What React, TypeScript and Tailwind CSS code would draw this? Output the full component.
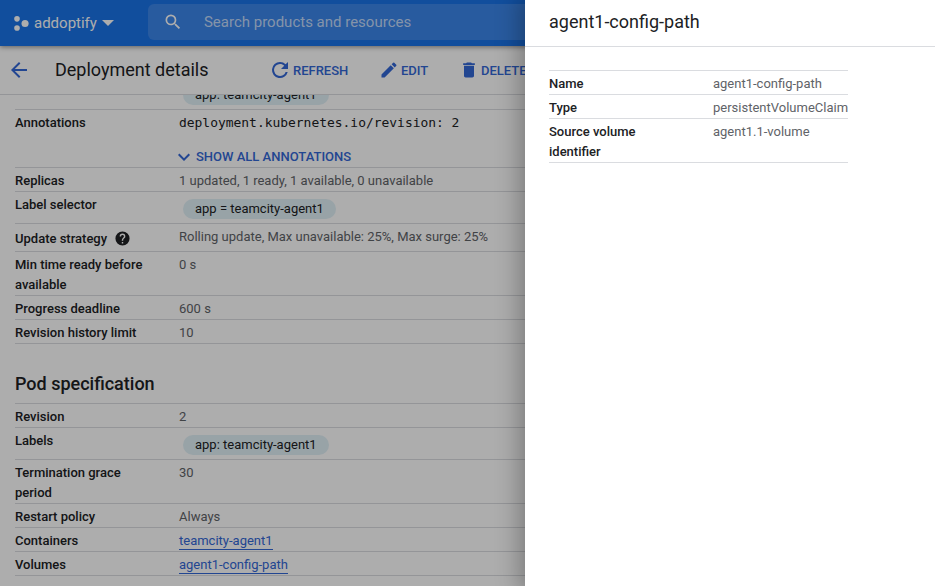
import React from "react";

function Row({ label, children, cls = "" }: { label: React.ReactNode; children?: React.ReactNode; cls?: string }) {
  return (
    <div className={`flex border-b border-[#dadce0] text-[13px] leading-5 ${cls}`}>
      <div className="w-[164px] shrink-0 pr-2 font-medium text-[#202124]">{label}</div>
      <div className="flex-1 text-[#5f6368] whitespace-nowrap">{children}</div>
    </div>
  );
}

function Chip({ children }: { children: React.ReactNode }) {
  return (
    <span className="ml-[4px] mt-[4px] inline-flex h-5 items-center rounded-full bg-[#e1f1f7] px-3 text-[13px] leading-5 text-[#202124]">
      {children}
    </span>
  );
}

function Link({ children }: { children: React.ReactNode }) {
  return <span className="inline-block h-[19px] border-b border-[#3367d6] leading-5 text-[#3367d6]">{children}</span>;
}

function Action({ icon, label, cls, gap }: { icon: React.ReactNode; label: string; cls: string; gap: string }) {
  return (
    <div className={`flex shrink-0 items-center text-[13px] font-medium text-[#3367d6] ${cls} ${gap}`}>
      {icon}
      <span className="mt-[2px]">{label}</span>
    </div>
  );
}

export default function App() {
  return (
    <div className="relative h-[586px] w-[935px] overflow-hidden bg-white font-['Roboto',sans-serif]">
      <div className="flex h-full w-full flex-col">
        <header className="relative z-10 flex h-[46px] shrink-0 items-center bg-[#1a73e8] shadow-[0_1px_5px_rgba(0,0,0,0.45)]">
          <svg viewBox="0 0 16 16" className="ml-[14px] h-[15px] w-[15px] shrink-0 fill-white">
            <circle cx="3.2" cy="3" r="3" />
            <circle cx="3.2" cy="12.8" r="3" />
            <circle cx="11.8" cy="8" r="3.8" />
          </svg>
          <span className="ml-[5px] text-[15px] leading-none text-white">addoptify</span>
          <svg viewBox="0 0 12 6" className="ml-[5px] mt-[-1px] h-[6px] w-[12px] shrink-0 fill-white">
            <path d="M0 0h12L6 6z" />
          </svg>
          <div className="mb-[2px] ml-[34px] flex h-9 w-[500px] shrink-0 items-center rounded-[6px] bg-[#3c86eb]">
            <svg viewBox="0 0 24 24" className="ml-[15px] h-5 w-5 shrink-0 fill-white">
              <path d="M15.5 14h-.79l-.28-.27A6.47 6.47 0 0 0 16 9.5 6.5 6.5 0 1 0 9.5 16c1.61 0 3.09-.59 4.23-1.57l.27.28v.79l5 4.99L20.49 19l-4.99-5zm-6 0C7.01 14 5 11.99 5 9.5S7.01 5 9.5 5 14 7.01 14 9.5 11.99 14 9.5 14z" />
            </svg>
            <span className="ml-[21px] text-[15px] text-[#c3dafa]">Search products and resources</span>
          </div>
        </header>

        <div className="flex h-[49px] shrink-0 items-center border-b border-[#dadce0] bg-white">
          <svg viewBox="0 0 24 24" className="ml-[7px] h-6 w-6 shrink-0 fill-[#3367d6]">
            <path d="M20 11H7.83l5.59-5.59L12 4l-8 8 8 8 1.41-1.41L7.83 13H20v-2z" />
          </svg>
          <h1 className="ml-[24px] w-[213px] shrink-0 text-[18px] leading-none text-[#202124]">Deployment details</h1>
          <Action
            cls="w-[111px]"
            gap="gap-[1px]"
            label="REFRESH"
            icon={
              <svg viewBox="0 0 24 24" className="h-6 w-6 fill-[#3367d6]">
                <path d="M17.65 6.35A7.96 7.96 0 0 0 12 4a8 8 0 1 0 7.73 10h-2.08A6 6 0 1 1 12 6c1.66 0 3.14.69 4.22 1.78L13 11h7V4l-2.35 2.35z" />
              </svg>
            }
          />
          <Action
            cls="w-[80px]"
            gap="gap-[2px]"
            label="EDIT"
            icon={
              <svg viewBox="0 0 24 24" className="h-[20px] w-[20px] fill-[#3367d6]">
                <path d="M3 17.25V21h3.75L17.81 9.94l-3.75-3.75L3 17.25zM20.71 7.04a1 1 0 0 0 0-1.41l-2.34-2.34a1 1 0 0 0-1.41 0l-1.83 1.83 3.75 3.75 1.83-1.83z" />
              </svg>
            }
          />
          <Action
            cls=""
            gap="gap-[2px]"
            label="DELETE"
            icon={
              <svg viewBox="0 0 24 24" className="h-[20px] w-[20px] fill-[#3367d6]">
                <path d="M6 19c0 1.1.9 2 2 2h8c1.1 0 2-.9 2-2V7H6v12zM19 4h-3.5l-1-1h-5l-1 1H5v2h14V4z" />
              </svg>
            }
          />
        </div>

        <main className="min-h-0 flex-1 overflow-hidden pl-[15px]">
          <div className="-mt-[17px]">
            <Row label="Labels" cls="h-[32px] pt-[3px]">
              <Chip>app: teamcity-agent1</Chip>
            </Row>
            <div className="flex h-[58px] border-b border-[#dadce0] pt-[3px] text-[13px] leading-5">
              <div className="w-[164px] shrink-0 font-medium text-[#202124]">Annotations</div>
              <div className="flex-1 whitespace-nowrap">
                <div className="font-['DejaVu_Sans_Mono',monospace] text-[12.95px] leading-5 text-[#202124]">deployment.kubernetes.io/revision: 2</div>
                <div className="ml-[-7px] mt-[12px] flex items-center font-medium text-[#3367d6]">
                  <svg viewBox="0 0 24 24" className="h-6 w-6 fill-[#3367d6]">
                    <path d="M16.59 8.59 12 13.17 7.41 8.59 6 10l6 6 6-6z" />
                  </svg>
                  <span>SHOW ALL ANNOTATIONS</span>
                </div>
              </div>
            </div>
            <Row label="Replicas" cls="h-[24px] pt-[3px]">1 updated, 1 ready, 1 available, 0 unavailable</Row>
            <Row label="Label selector" cls="h-[32px] pt-[3px]">
              <Chip>app = teamcity-agent1</Chip>
            </Row>
            <div className="flex h-[28px] border-b border-[#dadce0] text-[13px] leading-5">
              <div className="flex w-[164px] shrink-0 items-center gap-[7px] pt-[2px] font-medium text-[#202124]">
                <span>Update strategy</span>
                <svg viewBox="0 0 24 24" className="h-[17px] w-[17px] fill-[#202124]">
                  <path d="M12 2a10 10 0 1 0 0 20 10 10 0 0 0 0-20zm1 17h-2v-2h2v2zm2.07-7.75-.9.92C13.45 12.9 13 13.5 13 15h-2v-.5c0-1.1.45-2.1 1.17-2.83l1.24-1.26A2 2 0 0 0 14 9a2 2 0 0 0-4 0H8a4 4 0 0 1 8 0c0 .88-.36 1.68-.93 2.25z" />
                </svg>
              </div>
              <div className="flex-1 whitespace-nowrap pt-[3px] text-[#5f6368]">Rolling update, Max unavailable: 25%, Max surge: 25%</div>
            </div>
            <Row label={<>Min time ready before<br />available</>} cls="h-[44px] pt-[3px]">0 s</Row>
            <Row label="Progress deadline" cls="h-[24px] pt-[3px]">600 s</Row>
            <Row label="Revision history limit" cls="h-[24px] pt-[3px]">10</Row>

            <h2 className="flex h-[60px] items-end border-b border-[#dadce0] pb-[7px] text-[18px] font-medium leading-6 text-[#202124]">Pod specification</h2>

            <Row label="Revision" cls="h-[24px] pt-[3px]">2</Row>
            <Row label="Labels" cls="h-[32px] pt-[3px]">
              <Chip>app: teamcity-agent1</Chip>
            </Row>
            <Row label={<>Termination grace<br />period</>} cls="h-[44px] pt-[3px]">30</Row>
            <Row label="Restart policy" cls="h-[24px] pt-[3px]">Always</Row>
            <Row label="Containers" cls="h-[24px] pt-[3px]"><Link>teamcity-agent1</Link></Row>
            <Row label="Volumes" cls="h-[24px] pt-[3px]"><Link>agent1-config-path</Link></Row>
          </div>
        </main>
      </div>

      <div className="absolute inset-0 z-20 bg-black/[0.32]" />

      <aside className="absolute bottom-0 right-0 top-0 z-30 w-[410px] bg-white shadow-[0_0_22px_6px_rgba(0,0,0,0.28)]">
        <div className="flex h-[47px] items-center border-b border-[#dadce0] pb-[2px] pl-[24px] text-[18px] leading-none text-[#202124]">agent1-config-path</div>
        <div className="ml-[24px] mt-[23px] w-[299px] border-t border-[#dadce0]">
          <Row label="Name" cls="h-[24px] pt-[3px]">agent1-config-path</Row>
          <Row label="Type" cls="h-[24px] pt-[3px]">persistentVolumeClaim</Row>
          <Row label={<>Source volume<br />identifier</>} cls="h-[44px] pt-[3px]">agent1.1-volume</Row>
        </div>
      </aside>
    </div>
  );
}
